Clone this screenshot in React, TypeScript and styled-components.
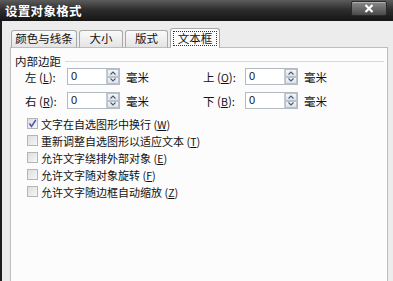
import styled, { createGlobalStyle } from 'styled-components'

const GlobalStyle = createGlobalStyle`
  html, body {
    margin: 0;
    padding: 0;
    background: #ececec;
  }
  body {
    font-family: "Noto Sans CJK SC", "Noto Sans", sans-serif;
    font-size: 11.5px;
    color: #111;
  }
`

const Window = styled.div`
  width: 393px;
  height: 281px;
  display: flex;
  flex-direction: column;
  overflow: hidden;
`

const TitleBar = styled.div`
  height: 21px;
  flex: none;
  display: flex;
  align-items: center;
  justify-content: space-between;
  padding: 0 6px 0 5px;
  background: linear-gradient(#5c5c5c, #2e2e2e 45%, #151515);
  color: #fff;
  font-weight: 700;
  font-size: 12.5px;
  letter-spacing: 0.3px;
`

const CloseButton = styled.div`
  width: 34px;
  height: 13px;
  margin-top: -4px;
  display: flex;
  align-items: center;
  justify-content: center;
  background: linear-gradient(#8a8a8a, #4a4a4a);
  border: 1px solid #2a2a2a;
  border-radius: 2px;
  box-shadow: inset 0 1px 0 #b0b0b0;
`

const Body = styled.div`
  flex: 1;
  display: flex;
  flex-direction: column;
  border-left: 2px solid #1e1e1e;
  padding: 7px 5px 0 8px;
  background: #ececec;
`

const TabRow = styled.div`
  display: flex;
  align-items: flex-end;
  gap: 2px;
  padding-left: 1px;
  position: relative;
  z-index: 1;
  margin-bottom: -1px;
`

const Tab = styled.div<{ $active?: boolean; $w: number }>`
  width: ${(p) => p.$w}px;
  height: ${(p) => (p.$active ? 20 : 18)}px;
  box-sizing: border-box;
  display: flex;
  align-items: center;
  justify-content: center;
  border: 1px solid #a8a8a8;
  border-bottom: ${(p) => (p.$active ? 'none' : '1px solid #bdbdbd')};
  border-radius: 3px 3px 0 0;
  background: ${(p) =>
    p.$active ? '#fcfcfc' : 'linear-gradient(#fafafa, #e4e4e4)'};
  font-size: 11.5px;
  line-height: 1;
`

const FocusText = styled.span`
  border: 1px dotted #333;
  padding: 1px 4px;
`

const Panel = styled.div`
  flex: 1;
  border: 1px solid #bdbdbd;
  border-bottom: none;
  background: #fcfcfc;
  padding: 7px 3px 0 4px;
`

const GroupHead = styled.div`
  display: flex;
  align-items: center;
  height: 12px;
  gap: 4px;
  line-height: 12px;

  &::after {
    content: '';
    flex: 1;
    border-top: 1px solid #d8d8d8;
  }
`

const Grid = styled.div`
  padding: 1px 0 0 10px;
  display: flex;
  flex-direction: column;
  gap: 7px;
`

const Row = styled.div`
  display: flex;
  height: 17px;
`

const Field = styled.div<{ $w?: number }>`
  width: ${(p) => (p.$w ? `${p.$w}px` : 'auto')};
  display: flex;
  align-items: center;
`

const Label = styled.span`
  width: 42px;
  white-space: nowrap;
`

const Key = styled.span`
  text-decoration: underline;
  font-size: 10.5px;
`

const Spin = styled.div`
  width: 53px;
  height: 17px;
  box-sizing: border-box;
  display: flex;
  border: 1px solid #b4bac2;
  background: #fff;
`

const SpinText = styled.span`
  flex: 1;
  padding-left: 3px;
  line-height: 15px;
  font-family: "Liberation Sans", sans-serif;
  font-size: 11px;
`

const SpinButtons = styled.div`
  width: 12px;
  display: flex;
  flex-direction: column;
  border-left: 1px solid #c6ccd4;
`

const SpinHalf = styled.div`
  flex: 1;
  display: flex;
  align-items: center;
  justify-content: center;
  background: linear-gradient(#f4f6f9, #dde3ea);
  border: 1px solid #b9c1cc;
`

const Unit = styled.span`
  margin-left: 6px;
`

const Checks = styled.div`
  margin-top: 6px;
  padding-left: 12px;
  display: flex;
  flex-direction: column;
`

const CheckRow = styled.div`
  height: 17px;
  display: flex;
  align-items: center;
  gap: 3px;
  white-space: nowrap;
  font-size: 11px;
`

const Box = styled.div`
  width: 11px;
  height: 11px;
  box-sizing: border-box;
  border: 1px solid #b5b5b5;
  background: linear-gradient(135deg, #dedede, #f6f6f6);
  display: flex;
  align-items: center;
  justify-content: center;
`

const Chevron = ({ up }: { up?: boolean }) => (
  <svg width="6" height="4" viewBox="0 0 6 4">
    <path
      d={up ? 'M0.5 3.5 L3 1 L5.5 3.5' : 'M0.5 0.5 L3 3 L5.5 0.5'}
      fill="none"
      stroke="#4a5a70"
      strokeWidth="1.1"
    />
  </svg>
)

const SpinBox = () => (
  <Spin>
    <SpinText>0</SpinText>
    <SpinButtons>
      <SpinHalf>
        <Chevron up />
      </SpinHalf>
      <SpinHalf>
        <Chevron />
      </SpinHalf>
    </SpinButtons>
  </Spin>
)

const Margin = ({ name, k }: { name: string; k: string }) => (
  <>
    <Label>
      {name} (<Key>{k}</Key>):
    </Label>
    <SpinBox />
    <Unit>毫米</Unit>
  </>
)

const checks = [
  { text: '文字在自选图形中换行', k: 'W', on: true },
  { text: '重新调整自选图形以适应文本', k: 'T' },
  { text: '允许文字绕排外部对象', k: 'E' },
  { text: '允许文字随对象旋转', k: 'F' },
  { text: '允许文字随边框自动缩放', k: 'Z' },
]

export default function App() {
  return (
    <>
      <GlobalStyle />
      <Window>
        <TitleBar>
          <span>设置对象格式</span>
          <CloseButton>
            <svg width="10" height="9" viewBox="0 0 10 9">
              <path d="M1.5 1 L8.5 8 M8.5 1 L1.5 8" stroke="#fff" strokeWidth="2.2" />
            </svg>
          </CloseButton>
        </TitleBar>
        <Body>
          <TabRow>
            <Tab $w={66}>颜色与线条</Tab>
            <Tab $w={44}>大小</Tab>
            <Tab $w={43}>版式</Tab>
            <Tab $w={50} $active>
              <FocusText>文本框</FocusText>
            </Tab>
          </TabRow>
          <Panel>
            <GroupHead>内部边距</GroupHead>
            <Grid>
              <Row>
                <Field $w={178}>
                  <Margin name="左" k="L" />
                </Field>
                <Field>
                  <Margin name="上" k="O" />
                </Field>
              </Row>
              <Row>
                <Field $w={178}>
                  <Margin name="右" k="R" />
                </Field>
                <Field>
                  <Margin name="下" k="B" />
                </Field>
              </Row>
            </Grid>
            <Checks>
              {checks.map((c) => (
                <CheckRow key={c.k}>
                  <Box>
                    {c.on && (
                      <svg width="9" height="9" viewBox="0 0 9 9">
                        <path
                          d="M1.5 4.5 L3.5 7.5 L7.8 1"
                          fill="none"
                          stroke="#4b56b8"
                          strokeWidth="1.5"
                        />
                      </svg>
                    )}
                  </Box>
                  <span>
                    {c.text} (<Key>{c.k}</Key>)
                  </span>
                </CheckRow>
              ))}
            </Checks>
          </Panel>
        </Body>
      </Window>
    </>
  )
}
